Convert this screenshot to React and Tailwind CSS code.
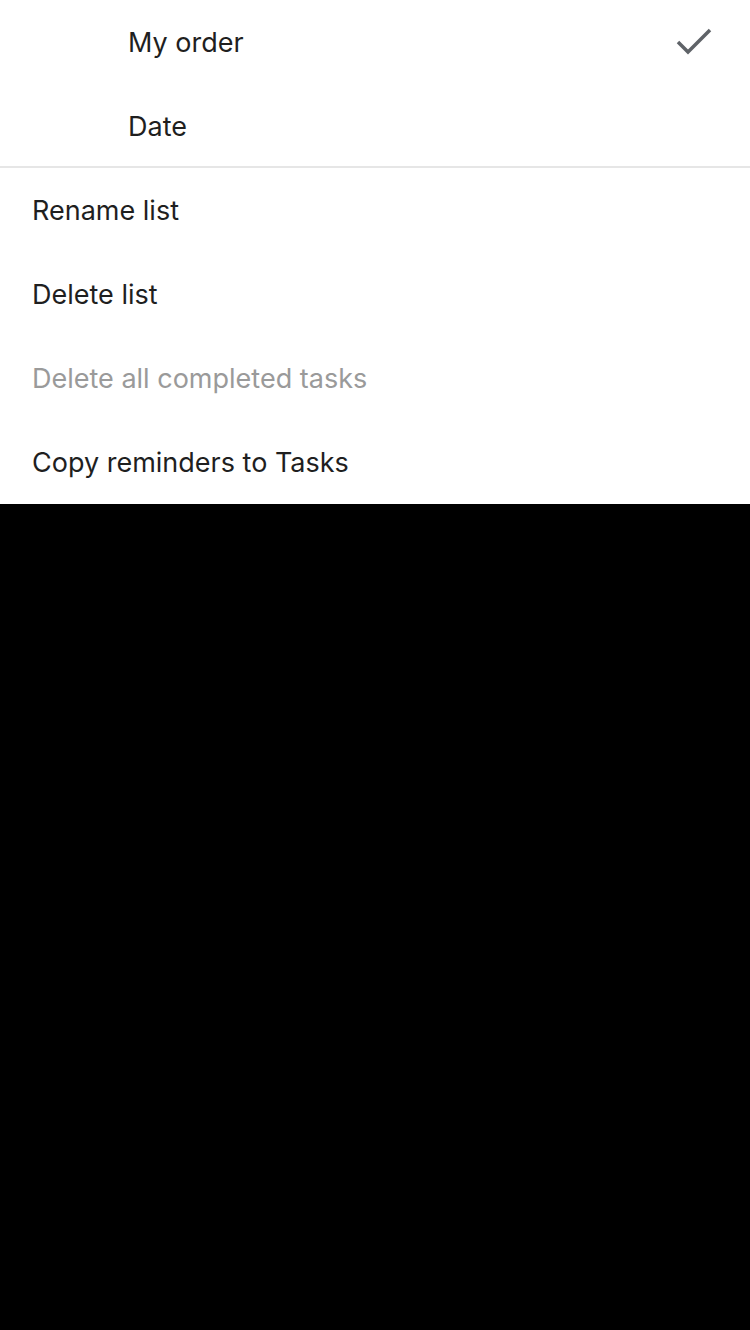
import React from "react";

function Row({ children, indent, muted, right }) {
  return (
    <div
      className={`h-[84px] flex items-center justify-between ${indent ? "pl-[128px]" : "pl-[32px]"} pr-[38px] text-[27px] leading-none ${muted ? "text-[#9a9a9a]" : "text-[#1f1f1f]"}`}
    >
      <span>{children}</span>
      {right}
    </div>
  );
}

export default function App() {
  return (
    <div className="w-[750px] h-[1330px] bg-black" style={{ fontFamily: "Inter, 'Noto Sans', sans-serif" }}>
      <div className="bg-white">
        <Row
          indent
          right={
            <svg width="36" height="28" viewBox="0 0 36 28" fill="none">
              <path d="M2 14 L12 24 L34 2" stroke="#5f6368" strokeWidth="3.5" />
            </svg>
          }
        >
          My order
        </Row>
        <Row indent>Date</Row>
        <div className="h-[2px] bg-[#e6e6e6] -mt-[2px]" />
        <Row>Rename list</Row>
        <Row>Delete list</Row>
        <Row muted>Delete all completed tasks</Row>
        <Row>Copy reminders to Tasks</Row>
      </div>
    </div>
  );
}
